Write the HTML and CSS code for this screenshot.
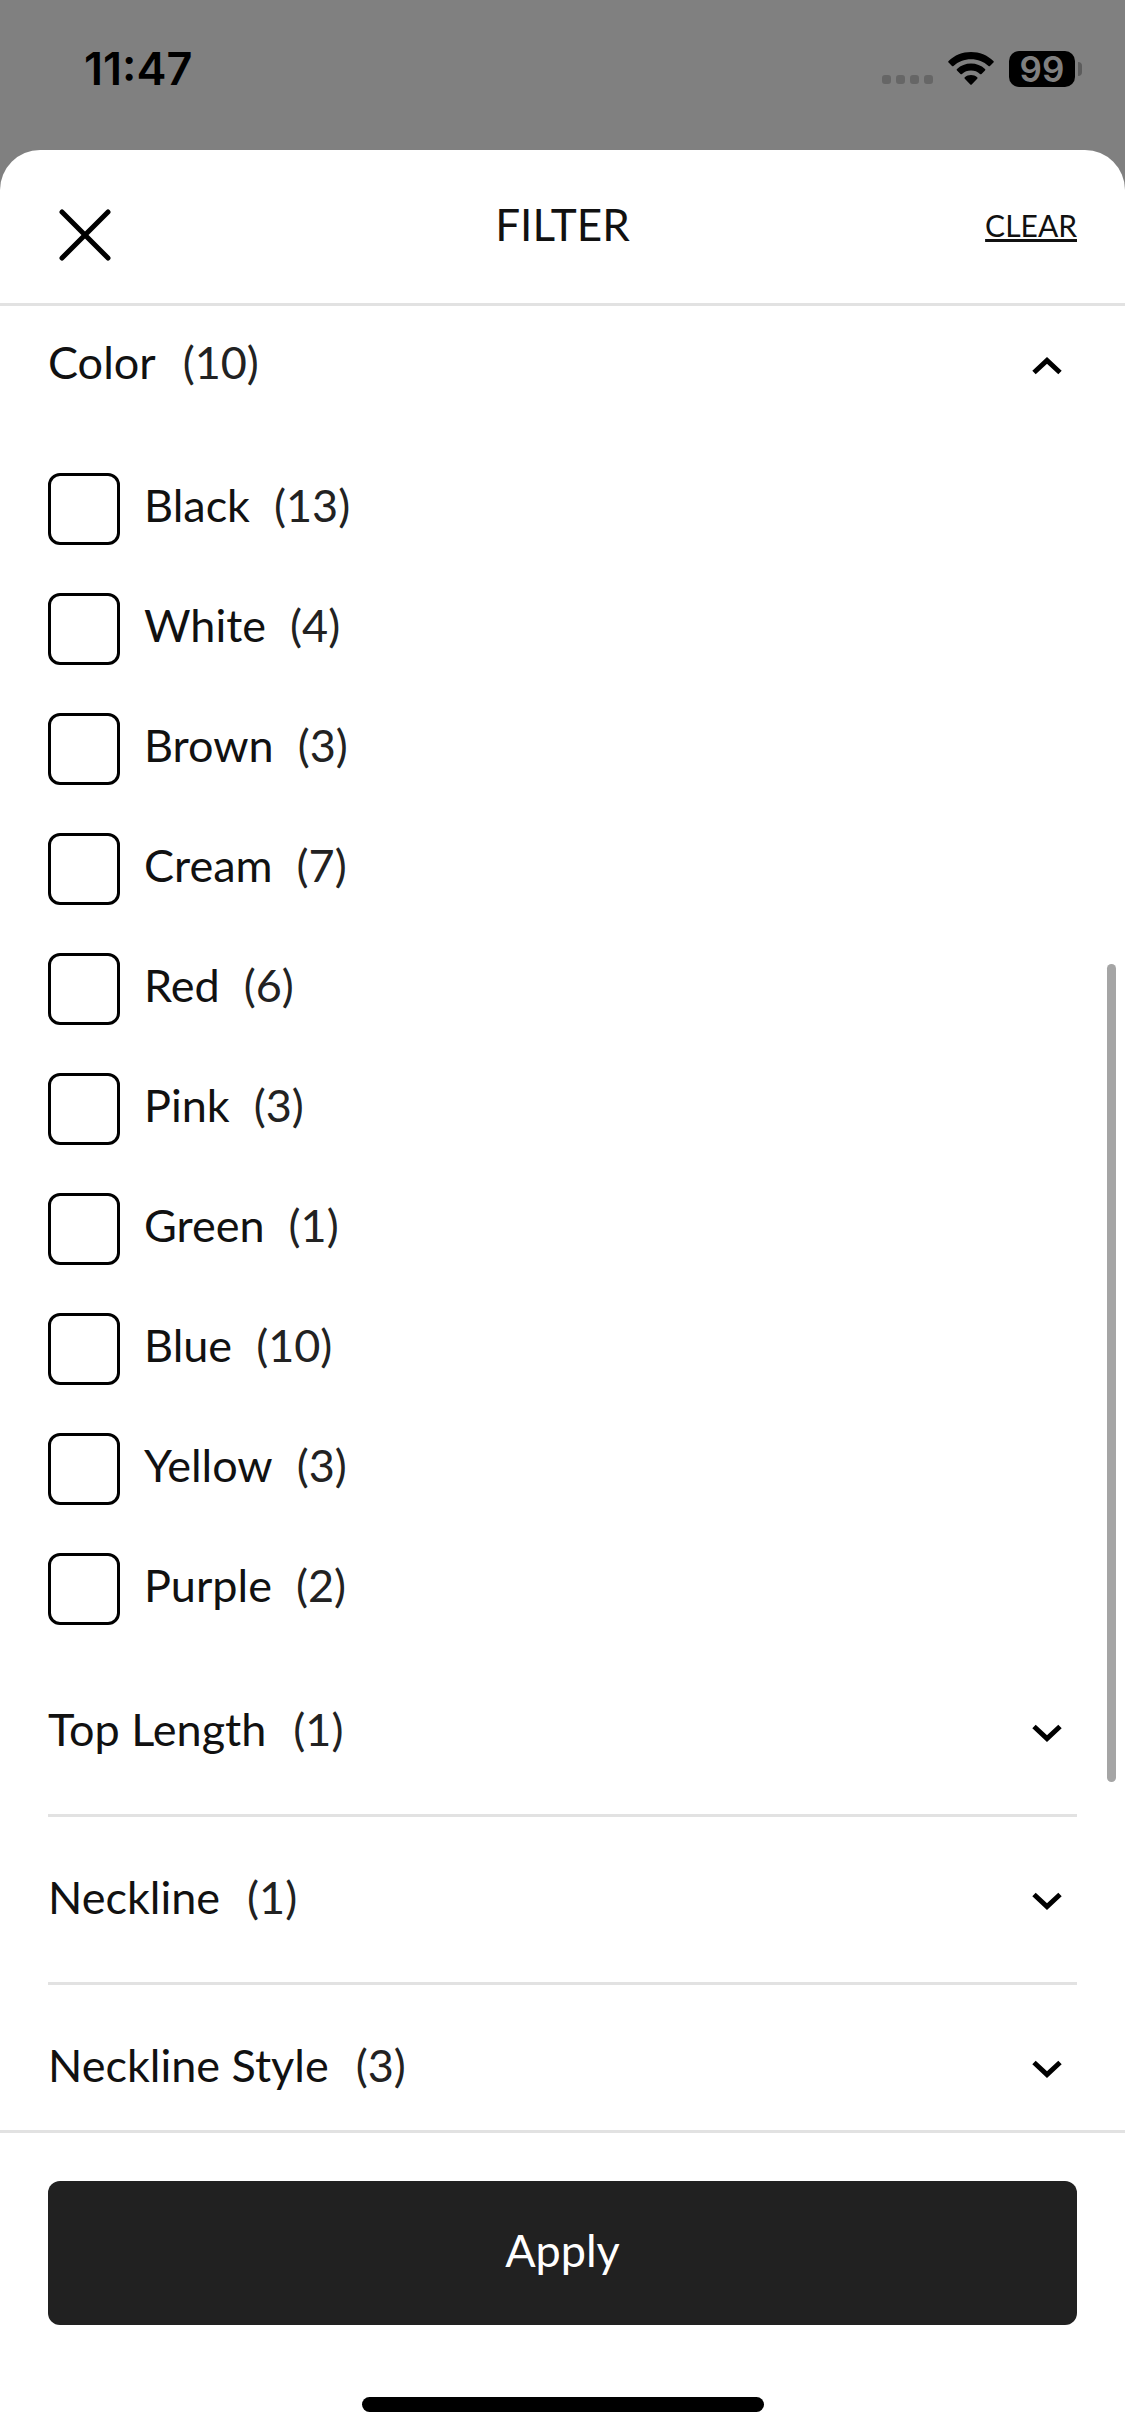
FILE: index.html
```html
<!DOCTYPE html>
<html lang="en">
<head>
<meta charset="utf-8">
<meta name="viewport" content="width=device-width, initial-scale=1">
<title>Filter</title>
<link rel="stylesheet" href="styles.css">
</head>
<body>
<div class="status">
  <time class="status-time">11:47</time>
  <div class="status-icons">
    <svg class="signal" width="51" height="12" viewBox="0 0 51 12" aria-hidden="true"><rect width="9" height="9" rx="3"/><rect x="14" width="9" height="9" rx="3"/><rect x="28" width="9" height="9" rx="3"/><rect x="42" width="9" height="9" rx="3"/></svg>
    <svg class="wifi" width="46" height="34" viewBox="0 0 46 34" aria-hidden="true"><path d="M23 0C14.500 0 6.500 3.300.600 8.900a1 1 0 0 0 0 1.500l3.400 3.500a1 1 0 0 0 1.500 0C10.200 9.600 16.300 7.200 23 7.200s12.800 2.400 17.500 6.700a1 1 0 0 0 1.500 0l3.400-3.500a1 1 0 0 0 0-1.500C39.500 3.300 31.500 0 23 0z"/><path d="M23 11.500c-5.300 0-10.200 2-14 5.400a1 1 0 0 0 0 1.500l3.500 3.500a1 1 0 0 0 1.500 0c2.400-2.100 5.500-3.300 9-3.300s6.600 1.200 9 3.300a1 1 0 0 0 1.500 0l3.500-3.500a1 1 0 0 0 0-1.500c-3.800-3.400-8.700-5.400-14-5.400z"/><path d="M23 23c-2.400 0-4.500.800-6.200 2.200a1 1 0 0 0 0 1.500l5.500 5.700a1 1 0 0 0 1.400 0l5.500-5.700a1 1 0 0 0 0-1.500C27.500 23.800 25.400 23 23 23z"/></svg>
    <div class="battery"><span class="battery-level">99</span><span class="battery-tip"></span></div>
  </div>
</div>

<main class="sheet">
  <header class="sheet-header">
    <button class="close" type="button" aria-label="Close"><svg width="52" height="52" viewBox="0 0 52 52" aria-hidden="true"><path d="M3 3 49 49M49 3 3 49"/></svg></button>
    <h1 class="title">FILTER</h1>
    <a class="clear" href="#">CLEAR</a>
  </header>

  <div class="body">
    <div class="filters">
      <section class="group">
        <button class="row row-open" type="button" aria-expanded="true"><span class="name">Color</span><span class="count">(10)</span><svg class="chevron" width="30" height="18" viewBox="0 0 30 18" aria-hidden="true"><path d="M2 15.500 15 3.500 28 15.500"/></svg></button>
        <ul class="options">
          <li><label class="option"><input class="box" type="checkbox"><span class="name">Black</span><span class="count">(13)</span></label></li>
          <li><label class="option"><input class="box" type="checkbox"><span class="name">White</span><span class="count">(4)</span></label></li>
          <li><label class="option"><input class="box" type="checkbox"><span class="name">Brown</span><span class="count">(3)</span></label></li>
          <li><label class="option"><input class="box" type="checkbox"><span class="name">Cream</span><span class="count">(7)</span></label></li>
          <li><label class="option"><input class="box" type="checkbox"><span class="name">Red</span><span class="count">(6)</span></label></li>
          <li><label class="option"><input class="box" type="checkbox"><span class="name">Pink</span><span class="count">(3)</span></label></li>
          <li><label class="option"><input class="box" type="checkbox"><span class="name">Green</span><span class="count">(1)</span></label></li>
          <li><label class="option"><input class="box" type="checkbox"><span class="name">Blue</span><span class="count">(10)</span></label></li>
          <li><label class="option"><input class="box" type="checkbox"><span class="name">Yellow</span><span class="count">(3)</span></label></li>
          <li><label class="option"><input class="box" type="checkbox"><span class="name">Purple</span><span class="count">(2)</span></label></li>
        </ul>
      </section>
      <button class="row" type="button" aria-expanded="false"><span class="name">Top Length</span><span class="count">(1)</span><svg class="chevron" width="30" height="18" viewBox="0 0 30 18" aria-hidden="true"><path d="M2 2.500 15 14.500 28 2.500"/></svg></button>
      <button class="row" type="button" aria-expanded="false"><span class="name">Neckline</span><span class="count">(1)</span><svg class="chevron" width="30" height="18" viewBox="0 0 30 18" aria-hidden="true"><path d="M2 2.500 15 14.500 28 2.500"/></svg></button>
      <button class="row" type="button" aria-expanded="false"><span class="name">Neckline Style</span><span class="count">(3)</span><svg class="chevron" width="30" height="18" viewBox="0 0 30 18" aria-hidden="true"><path d="M2 2.500 15 14.500 28 2.500"/></svg></button>
    </div>
    <div class="scrollbar"></div>
  </div>

  <footer class="footer">
    <button class="apply" type="button">Apply</button>
    <div class="home-bar"></div>
  </footer>
</main>
</body>
</html>
```
FILE: styles.css
```css
* {
  box-sizing: border-box;
}

body {
  display: flex;
  flex-direction: column;
  height: 100vh;
  margin: 0;
  background: #808080;
  color: #111;
  font-family: Lato, "Open Sans", sans-serif;
  font-size: 45px;
  line-height: 54px;
}

button {
  margin: 0;
  padding: 0;
  border: 0;
  background: none;
  color: inherit;
  font: inherit;
}

/* Status bar */
.status {
  display: flex;
  flex: none;
  align-items: center;
  justify-content: space-between;
  height: 150px;
  padding: 0 43px 12px 84px;
  color: #000;
  font-family: Inter, "Liberation Sans", sans-serif;
  font-weight: 600;
}

.status-icons {
  display: flex;
  align-items: center;
  gap: 15px;
}

.signal {
  align-self: flex-end;
  fill: #666;
}

.battery {
  display: flex;
  align-items: center;
  gap: 3px;
}

.battery-level {
  width: 66px;
  border-radius: 10px;
  background: #000;
  color: #808080;
  font-size: 35px;
  line-height: 36px;
  text-align: center;
}

.battery-tip {
  width: 4px;
  height: 14px;
  border-radius: 0 4px 4px 0;
  background: #5c5c5c;
}

/* Sheet */
.sheet {
  display: flex;
  flex: 1;
  flex-direction: column;
  min-height: 0;
  border-radius: 40px 40px 0 0;
  background: #fff;
}

.sheet-header {
  display: grid;
  flex: none;
  grid-template-columns: 1fr auto 1fr;
  align-items: center;
  height: 156px;
  padding: 0 48px;
  border-bottom: 3px solid #e2e2e2;
}

.close {
  display: flex;
  align-items: flex-end;
  justify-content: center;
  justify-self: start;
  width: 74px;
  height: 68px;
}

.close svg {
  fill: none;
  stroke: #000;
  stroke-linecap: round;
  stroke-width: 5;
}

.title {
  margin: 0;
  padding-bottom: 6px;
  font-size: 44px;
  font-weight: 400;
}

.clear {
  justify-self: end;
  padding-bottom: 3px;
  color: inherit;
  font-size: 30px;
  line-height: 36px;
  text-decoration-thickness: 3px;
  text-underline-offset: 2px;
}

.body {
  position: relative;
  flex: 1;
  min-height: 0;
}

.filters {
  height: 100%;
  padding: 0 48px;
  overflow: hidden;
}

.row {
  display: flex;
  align-items: center;
  gap: 27px;
  width: 100%;
  height: 168px;
  padding-top: 2px;
  border-bottom: 3px solid #e2e2e2;
}

.row-open {
  height: 118px;
  border-bottom: 0;
}

.name,
.count {
  padding-bottom: 8px;
}

.count {
  color: #222;
}

.chevron {
  margin: 0 15px 0 auto;
  fill: none;
  stroke: #000;
  stroke-width: 5;
}

.options {
  margin: 0;
  padding: 25px 0 0;
  list-style: none;
}

.option {
  display: flex;
  align-items: center;
  gap: 24px;
  height: 120px;
}

.box {
  width: 72px;
  height: 72px;
  margin: 0;
  border: 3px solid #000;
  border-radius: 12px;
  background: #fff;
  appearance: none;
}

.box:checked {
  background: #212121;
}

.scrollbar {
  position: absolute;
  top: 658px;
  right: 9px;
  width: 9px;
  height: 818px;
  border-radius: 5px;
  background: #a5a5a5;
}

/* Footer */
.footer {
  display: flex;
  flex: none;
  flex-direction: column;
  align-items: center;
  gap: 72px;
  padding: 48px 48px 24px;
  border-top: 3px solid #e2e2e2;
}

.apply {
  width: 100%;
  height: 144px;
  padding-bottom: 6px;
  border-radius: 12px;
  background: #212121;
  color: #fff;
}

.home-bar {
  width: 402px;
  height: 15px;
  border-radius: 8px;
  background: #000;
}
```
